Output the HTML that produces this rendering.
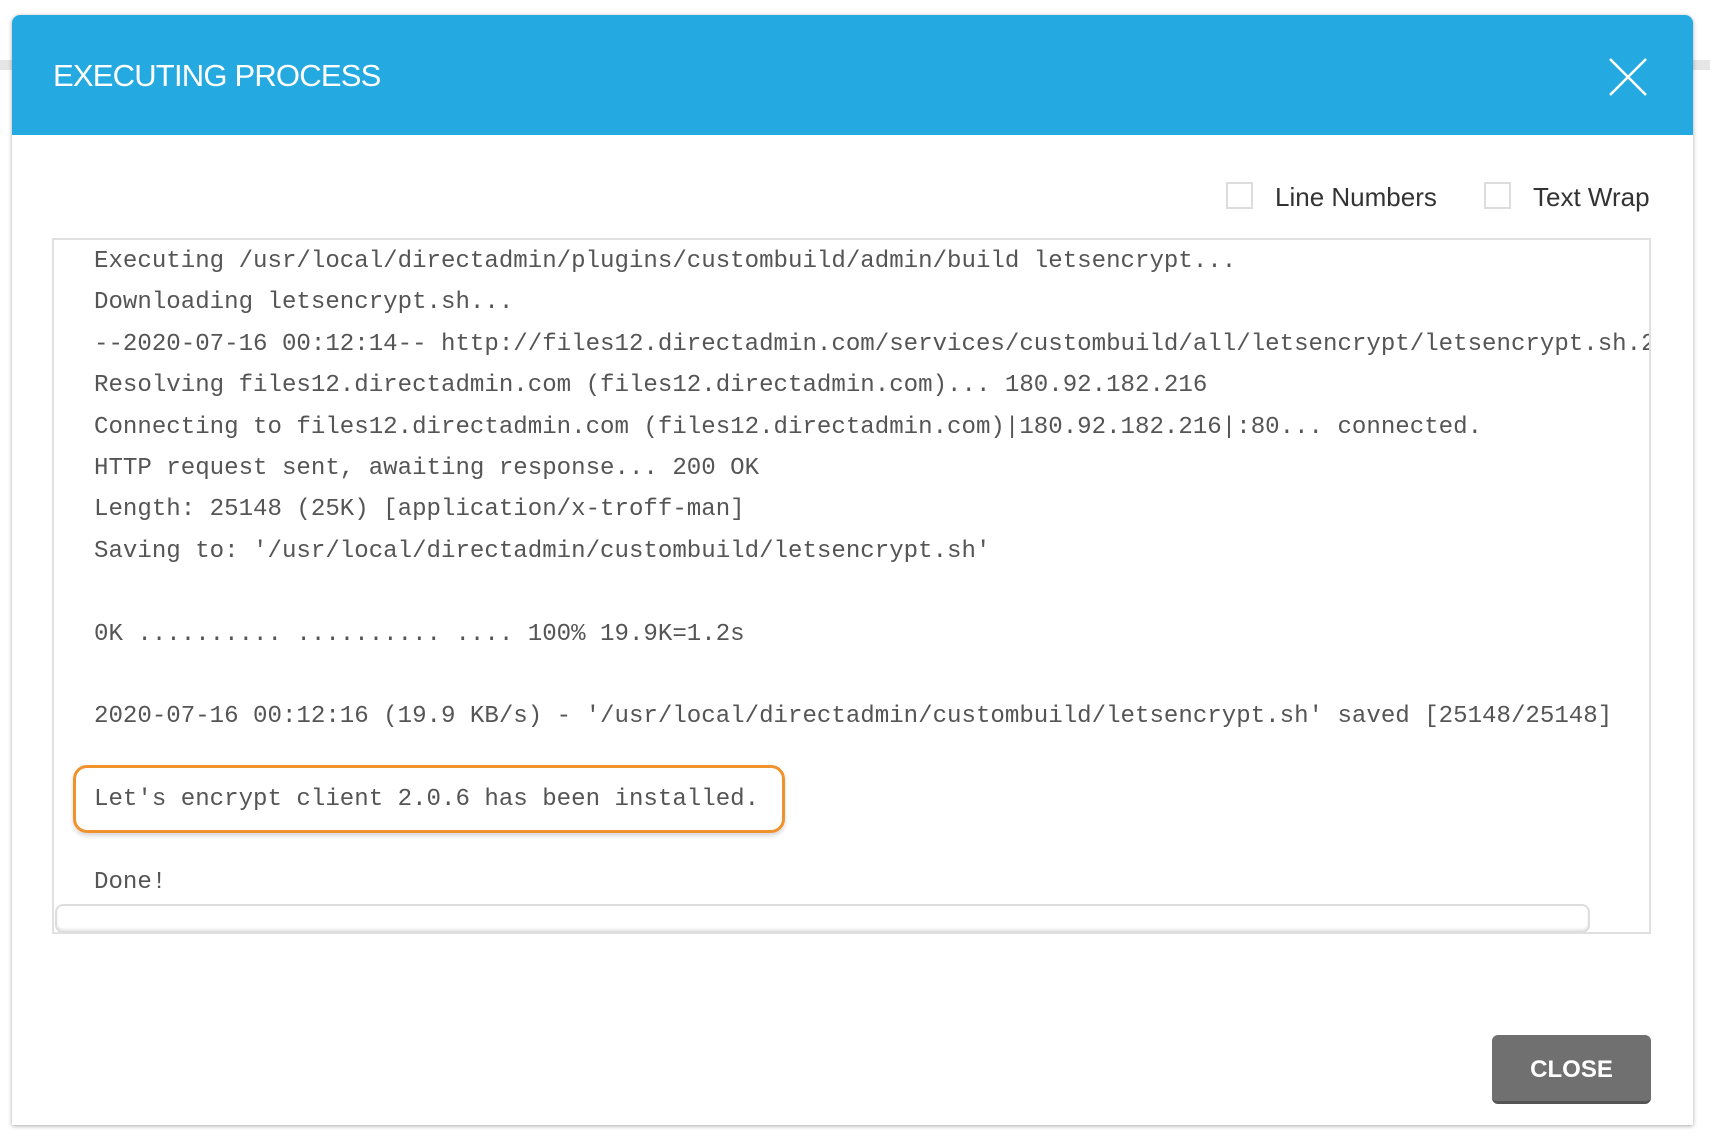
<!DOCTYPE html>
<html><head><meta charset="utf-8"><style>
html,body{margin:0;padding:0;width:1710px;height:1144px;background:#fff;overflow:hidden;position:relative;font-family:"Liberation Sans",sans-serif}
.bgl{position:absolute;background:#e6e6e6;height:10px}
.modal{position:absolute;left:12px;top:15px;width:1681px;height:1110px;background:#fff;border-radius:8px 8px 0 0;box-shadow:0 1px 4px rgba(0,0,0,.35)}
.hdr{position:absolute;left:0;top:0;width:100%;height:120px;background:#24aae0;border-radius:8px 8px 0 0}
.title{position:absolute;left:41px;top:43px;color:#fff;font-size:31px;line-height:36px;letter-spacing:-0.8px}
.cb{position:absolute;width:27px;height:27px;border:2px solid #ddd;box-sizing:border-box;top:167px}
.lbl{position:absolute;top:167px;font-size:26px;color:#333;line-height:30px}
.ta{position:absolute;left:40px;top:223px;width:1599px;height:696px;border:2px solid #e0e0e0;box-sizing:border-box;overflow:hidden}
.txt{position:absolute;left:40px;top:1px;font-family:"Liberation Mono",monospace;font-size:24.1px;line-height:41.4px;color:#555;white-space:pre}
.hl{position:absolute;left:19px;top:525px;width:712px;height:68px;border:3px solid #f0922e;border-radius:14px;box-sizing:border-box;box-shadow:0 3px 4px rgba(0,0,0,.15)}
.sb{position:absolute;left:1px;top:664px;width:1535px;height:29px;border:2px solid #ddd;border-radius:8px;box-sizing:border-box;box-shadow:inset 0 -2px 2px #e8e8e8}
.btn{position:absolute;left:1480px;top:1020px;width:159px;height:69px;background:#707070;border-radius:6px;color:#fff;font-weight:bold;font-size:24px;text-align:center;line-height:69px;border-bottom:3px solid #555;box-sizing:border-box}
</style></head><body>
<div class="bgl" style="left:0;top:60px;width:12px"></div>
<div class="bgl" style="left:1693px;top:60px;width:17px"></div>
<div class="modal">
<div class="hdr">
<div class="title">EXECUTING PROCESS</div>
<svg style="position:absolute;left:1596px;top:42px" width="40" height="40" viewBox="0 0 40 40"><path d="M2 2L38 38M38 2L2 38" stroke="#fff" stroke-width="2.5"/></svg>
</div>
<div class="cb" style="left:1214px"></div>
<div class="lbl" style="left:1263px">Line Numbers</div>
<div class="cb" style="left:1472px"></div>
<div class="lbl" style="left:1521px">Text Wrap</div>
<div class="ta">
<div class="txt">Executing /usr/local/directadmin/plugins/custombuild/admin/build letsencrypt...
Downloading letsencrypt.sh...
--2020-07-16 00:12:14-- http://files12.directadmin.com/services/custombuild/all/letsencrypt/letsencrypt.sh.2
Resolving files12.directadmin.com (files12.directadmin.com)... 180.92.182.216
Connecting to files12.directadmin.com (files12.directadmin.com)|180.92.182.216|:80... connected.
HTTP request sent, awaiting response... 200 OK
Length: 25148 (25K) [application/x-troff-man]
Saving to: '/usr/local/directadmin/custombuild/letsencrypt.sh'

0K .......... .......... .... 100% 19.9K=1.2s

2020-07-16 00:12:16 (19.9 KB/s) - '/usr/local/directadmin/custombuild/letsencrypt.sh' saved [25148/25148]

Let's encrypt client 2.0.6 has been installed.

Done!</div>
<div class="hl"></div>
<div class="sb"></div>
</div>
<div class="btn">CLOSE</div>
</div>
</body></html>
